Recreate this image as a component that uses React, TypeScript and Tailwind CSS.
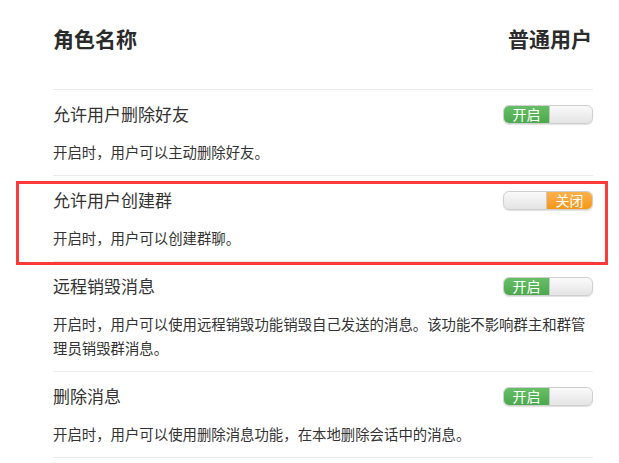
import React from 'react';

type Permission = {
  title: string;
  desc: string;
  enabled: boolean;
  highlight?: boolean;
};

const permissions: Permission[] = [
  { title: '允许用户删除好友', desc: '开启时，用户可以主动删除好友。', enabled: true },
  { title: '允许用户创建群', desc: '开启时，用户可以创建群聊。', enabled: false, highlight: true },
  {
    title: '远程销毁消息',
    desc: '开启时，用户可以使用远程销毁功能销毁自己发送的消息。该功能不影响群主和群管理员销毁群消息。',
    enabled: true,
  },
  { title: '删除消息', desc: '开启时，用户可以使用删除消息功能，在本地删除会话中的消息。', enabled: true },
];

const Switch: React.FC<{ on: boolean }> = ({ on }) => (
  <div className="flex h-[19px] w-[90px] shrink-0 overflow-hidden rounded-[6px] border border-[#cfcfcf] bg-gradient-to-b from-[#fafafa] to-[#e4e4e4] shadow-[0_1px_1px_rgba(0,0,0,0.12)]">
    {on ? (
      <>
        <div className="flex w-[45px] items-center justify-center bg-gradient-to-b from-[#66bf66] to-[#4ca84c] text-[14px] leading-none text-white">
          开启
        </div>
        <div className="flex-1 border-l border-[#c8c8c8]" />
      </>
    ) : (
      <>
        <div className="flex-1 border-r border-[#c8c8c8]" />
        <div className="flex w-[45px] items-center justify-center bg-gradient-to-b from-[#fbb24a] to-[#f6960f] text-[14px] leading-none text-white">
          关闭
        </div>
      </>
    )}
  </div>
);

export default function App() {
  return (
    <div
      className="min-h-[463px] w-full bg-white pl-[53px] pr-[26px] text-[#333]"
      style={{ fontFamily: '"Noto Sans CJK SC", "Noto Sans", sans-serif' }}
    >
      {/* Header */}
      <div className="flex items-center justify-between border-b border-[#ebebeb] pt-[26px] pb-[39px] text-[21px] font-bold leading-[24px] text-[#2b2b2b]">
        <span>角色名称</span>
        <span className="pr-[1px]">普通用户</span>
      </div>

      {/* Rows */}
      {permissions.map((p) => (
        <div key={p.title} className="relative border-b border-[#ebebeb] pt-[12px] pb-[11px]">
          <div className="flex items-center justify-between">
            <span className="text-[17px] leading-[24px] text-[#333]">{p.title}</span>
            <Switch on={p.enabled} />
          </div>
          <p className="mt-[14px] text-[14.4px] leading-[24px] text-[#333]">{p.desc}</p>
          {p.highlight && (
            <div className="pointer-events-none absolute left-[-37px] top-[5px] h-[84px] w-[592px] border-[3px] border-[#fb3a3a]" />
          )}
        </div>
      ))}
    </div>
  );
}
